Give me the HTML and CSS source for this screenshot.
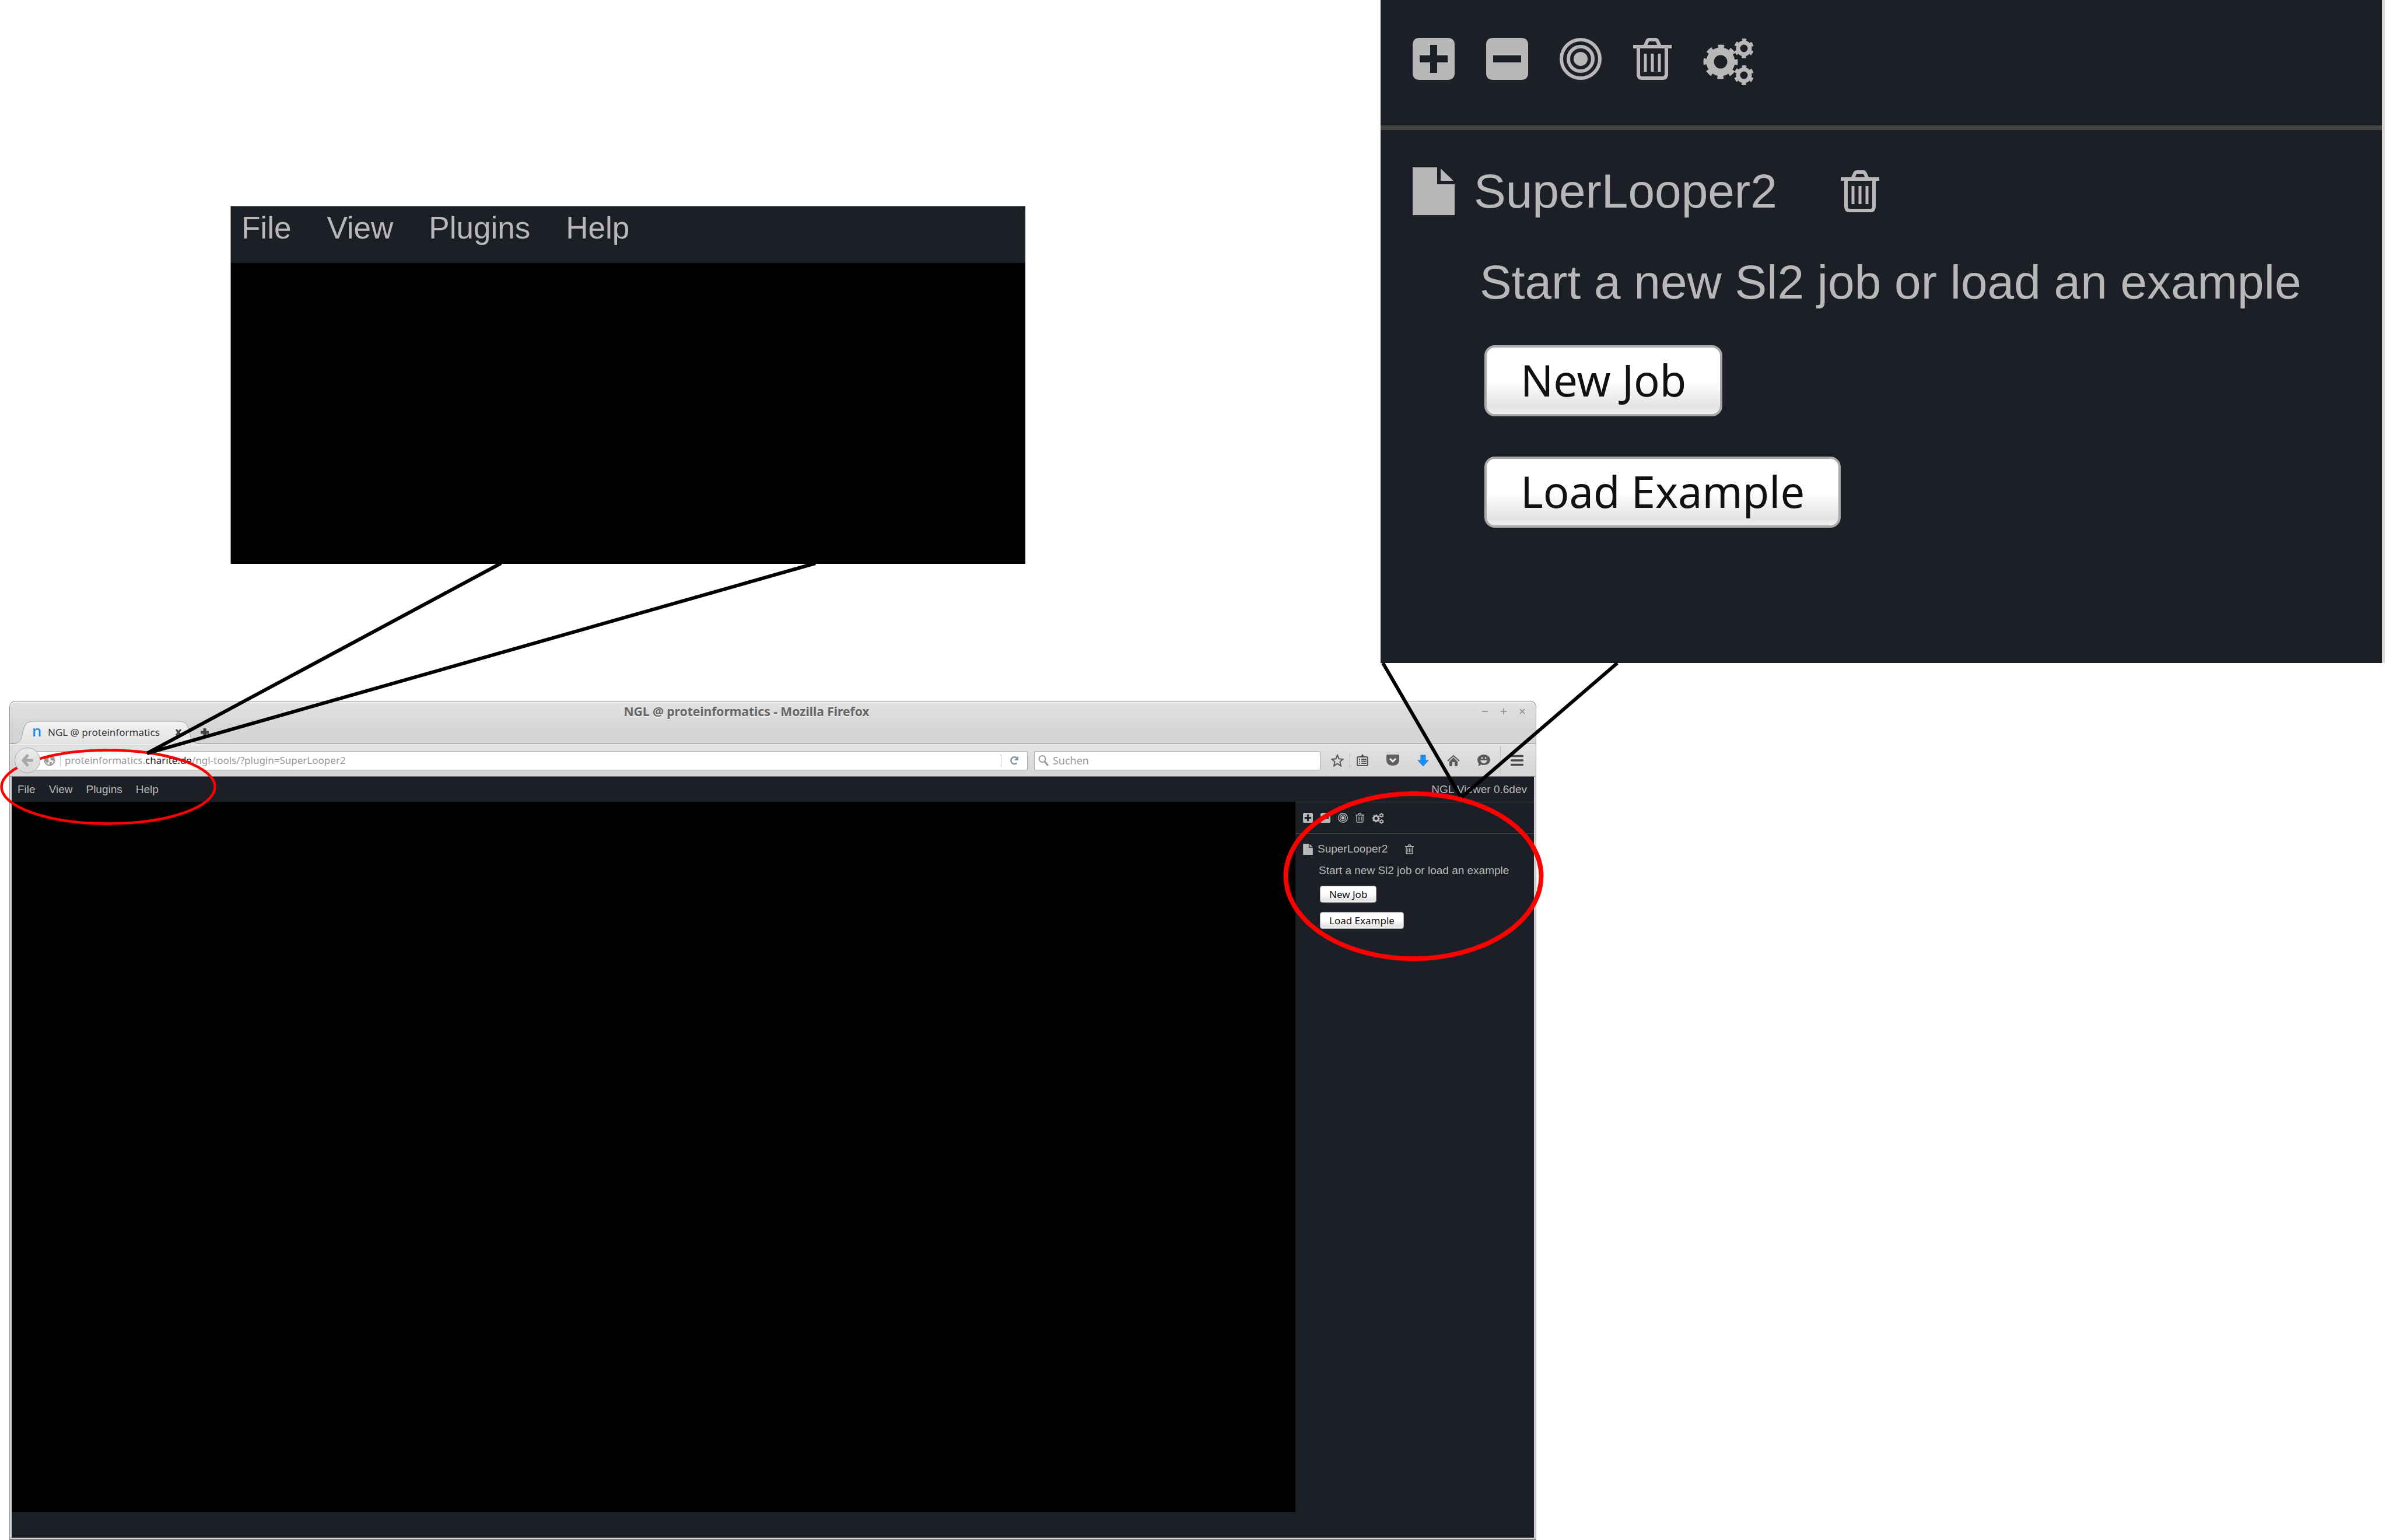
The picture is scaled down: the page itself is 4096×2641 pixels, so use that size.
FILE: index.html
```html
<!DOCTYPE html>
<html lang="en">
<head>
<meta charset="utf-8">
<title>NGL @ proteinformatics</title>
<link rel="stylesheet" href="styles.css">
</head>
<body>
<svg class="sprite" aria-hidden="true">
  <symbol id="i-plus" viewBox="0 0 72 72"><path fill-rule="evenodd" d="M12 0H60Q72 0 72 12V60Q72 72 60 72H12Q0 72 0 60V12Q0 0 12 0ZM30 12V30H12V42H30V60H42V42H60V30H42V12Z"/></symbol>
  <symbol id="i-minus" viewBox="0 0 72 72"><path fill-rule="evenodd" d="M12 0H60Q72 0 72 12V60Q72 72 60 72H12Q0 72 0 60V12Q0 0 12 0ZM12 30V42H60V30Z"/></symbol>
  <symbol id="i-target" viewBox="0 0 72 72"><circle cx="36" cy="36" r="12"/><g fill="none" stroke="currentColor" stroke-width="6"><circle cx="36" cy="36" r="21"/><circle cx="36" cy="36" r="33"/></g></symbol>
  <symbol id="i-trash" viewBox="0 0 66 72"><g fill="none" stroke="currentColor" stroke-width="6"><path d="M0 15H66M9 15V62Q9 69 15 69H51Q57 69 57 62V15M20 15L24 6Q25 3 28 3H38Q41 3 42 6L46 15"/><path stroke-width="5" d="M21 27V58M33 27V58M45 27V58"/></g></symbol>
  <symbol id="i-gears" viewBox="0 0 88 82"><g fill="none" stroke="currentColor"><circle cx="30" cy="41" r="18" stroke-width="13"/><circle cx="30" cy="41" r="26" stroke-width="7" stroke-dasharray="10.4 10.02" stroke-dashoffset="5.2"/><circle cx="70" cy="18" r="10" stroke-width="7"/><circle cx="70" cy="18" r="14" stroke-width="6" stroke-dasharray="7 7.66" stroke-dashoffset="-3.800"/><circle cx="70" cy="64" r="10" stroke-width="7"/><circle cx="70" cy="64" r="14" stroke-width="6" stroke-dasharray="7 7.66" stroke-dashoffset="-3.800"/></g></symbol>
  <symbol id="i-file" viewBox="0 0 72 82"><path d="M0 0H42V29H72V82H0ZM48 2L70 23H48Z"/></symbol>
</svg>

<main class="figure">
  <section class="callouts">
    <div class="ngl ngl-menu-detail">
      <nav class="menubar">
        <a href="#file">File</a><a href="#view">View</a><a href="#plugins">Plugins</a><a href="#help">Help</a>
      </nav>
      <div class="stage"></div>
    </div>
    <aside class="ngl panel panel-detail">
      <div class="toolbar">
        <button class="icon" aria-label="Expand all"><svg><use href="#i-plus"/></svg></button>
        <button class="icon" aria-label="Collapse all"><svg><use href="#i-minus"/></svg></button>
        <button class="icon" aria-label="Center"><svg><use href="#i-target"/></svg></button>
        <button class="icon icon-trash" aria-label="Dispose all"><svg><use href="#i-trash"/></svg></button>
        <button class="icon icon-gears" aria-label="Settings"><svg><use href="#i-gears"/></svg></button>
      </div>
      <div class="component">
        <div class="component-head">
          <span class="icon icon-file"><svg><use href="#i-file"/></svg></span>
          <span class="component-name">SuperLooper2</span>
          <button class="icon icon-trash" aria-label="Dispose"><svg><use href="#i-trash"/></svg></button>
        </div>
        <p class="hint">Start a new Sl2 job or load an example</p>
        <div class="actions">
          <button class="push">New Job</button>
          <button class="push">Load Example</button>
        </div>
      </div>
    </aside>
  </section>

  <section class="desktop">
    <div class="window">
      <header class="titlebar">
        <h1 class="window-title">NGL @ proteinformatics - Mozilla Firefox</h1>
        <div class="window-controls">
          <button class="chrome" aria-label="Minimize"><svg viewBox="0 0 12 12"><path d="M1 6H11"/></svg></button>
          <button class="chrome" aria-label="Maximize"><svg viewBox="0 0 12 12"><path d="M1 6H11M6 1V11"/></svg></button>
          <button class="chrome" aria-label="Close"><svg viewBox="0 0 12 12"><path d="M2 2L10 10M10 2L2 10"/></svg></button>
        </div>
      </header>
      <div class="tabs">
        <div class="tab">
          <svg class="tab-shape" viewBox="0 0 324 40" preserveAspectRatio="none" aria-hidden="true"><defs><linearGradient id="tabfill" x2="0" y2="1"><stop stop-color="#f3f3f3"/><stop offset="1" stop-color="#e2e2e2"/></linearGradient></defs><path d="M0 40C15 40 16 33 19 20C22 7 25 1 38 1H286C299 1 302 7 305 20C308 33 309 40 324 40Z" fill="url(#tabfill)"/><path d="M0 39C15 39 16 33 19 20C22 7 25 1 38 1H286C299 1 302 7 305 20C308 33 309 39 324 39" fill="none" stroke="#9aa1a7" stroke-width="1"/></svg>
          <span class="favicon">n</span>
          <span class="tab-title">NGL @ proteinformatics</span>
          <button class="chrome tab-close" aria-label="Close tab"><svg viewBox="0 0 12 12"><path d="M2 1L10 11M10 1L2 11"/></svg></button>
        </div>
        <button class="chrome tab-new" aria-label="New tab"><svg viewBox="0 0 14 14"><path d="M0 7H14M7 0V14"/></svg></button>
      </div>
      <div class="navbar">
        <button class="back" aria-label="Back"><svg viewBox="0 0 20 20"><path d="M11 2L4 10L11 18M4 10H18"/></svg></button>
        <div class="address">
          <svg class="globe" viewBox="0 0 20 20"><circle cx="10" cy="10" r="8.5" fill="#eee" stroke="#999" stroke-width="2"/><path fill="#999" d="M3 4L8 2L10 5L7 8L9 11L6 15L2 10ZM12 3L17 6L18 11L14 10L11 7ZM10 13L14 13L13 18L10 18Z"/></svg>
          <span class="url" role="textbox" aria-label="Address" contenteditable="true" spellcheck="false">proteinformatics.<b>charite.de</b>/ngl-tools/?plugin=SuperLooper2</span>
          <button class="reload" aria-label="Reload"><svg viewBox="0 0 16 16"><path d="M12.500 12.500A6 6 0 1 1 12 3.500" fill="none" stroke="#8293a2" stroke-width="2.500"/><path d="M15 0V8H8Z" fill="#8293a2"/></svg></button>
        </div>
        <label class="search">
          <svg viewBox="0 0 20 20" aria-hidden="true"><circle cx="8" cy="7.500" r="5.500" fill="none" stroke="#999" stroke-width="2"/><path d="M12 12L18 19" stroke="#999" stroke-width="3"/></svg>
          <input type="search" placeholder="Suchen" aria-label="Suchen">
        </label>
        <div class="tools">
          <button class="tool" aria-label="Bookmark"><svg viewBox="0 0 22 22"><path d="M11 2L13.700 8.300L20.500 9L15.400 13.500L17 20.500L11 16.700L5 20.500L6.600 13.500L1.500 9L8.300 8.300Z" fill="none" stroke="#555" stroke-width="2"/></svg></button>
          <i class="rule"></i>
          <button class="tool" aria-label="Bookmarks list"><svg viewBox="0 0 22 22"><path d="M8 4L11 0L14 4Z" fill="#555"/><rect x="2" y="5" width="18" height="15" rx="2" fill="none" stroke="#555" stroke-width="2"/><path d="M5 9H7M9 9H18M5 12.500H7M9 12.500H18M5 16H7M9 16H18" stroke="#555" stroke-width="2"/></svg></button>
          <button class="tool" aria-label="Pocket"><svg viewBox="0 0 22 22"><path d="M2 1H20Q22 1 22 3V9Q22 20 11 20Q0 20 0 9V3Q0 1 2 1Z" fill="#5f5f5f"/><path d="M6 8L11 13L16 8" fill="none" stroke="#eee" stroke-width="3"/></svg></button>
          <button class="tool" aria-label="Downloads"><svg viewBox="0 0 22 22"><path d="M7 2H15V11H20L11 21L2 11H7Z" fill="#1492fb" stroke="#2b78c0"/></svg></button>
          <button class="tool" aria-label="Home"><svg viewBox="0 0 22 22"><path d="M1 12L11 3L21 12" fill="none" stroke="#5a5a5a" stroke-width="2"/><path d="M4 13L11 6L18 13V21H13V14H9V21H4Z" fill="#5a5a5a"/></svg></button>
          <button class="tool" aria-label="Chat"><svg viewBox="0 0 22 22"><path d="M11 1C17 1 22 5 22 10C22 16 17 19 11 19Q8 19 6 18Q4 21 1 21Q3 19 2 16Q0 13 0 10C0 5 5 1 11 1Z" fill="#5a5a5a"/><circle cx="8" cy="7" r="1.500" fill="#ddd"/><circle cx="14" cy="7" r="1.500" fill="#ddd"/><path d="M5 11H17Q15 16 11 16Q7 16 5 11Z" fill="#ddd"/></svg></button>
          <i class="rule rule-tall"></i>
          <button class="tool" aria-label="Menu"><svg viewBox="0 0 22 22"><path d="M1.500 3.500H20.500M1.500 11H20.500M1.500 18.500H20.500" stroke="#4a4a4a" stroke-width="3.500" stroke-linecap="round"/></svg></button>
        </div>
      </div>
      <div class="ngl app">
        <nav class="menubar">
          <a href="#file">File</a><a href="#view">View</a><a href="#plugins">Plugins</a><a href="#help">Help</a>
          <span class="version">NGL Viewer 0.6dev</span>
        </nav>
        <div class="workspace">
          <div class="stage"></div>
          <aside class="panel">
            <div class="toolbar">
              <button class="icon" aria-label="Expand all"><svg><use href="#i-plus"/></svg></button>
              <button class="icon" aria-label="Collapse all"><svg><use href="#i-minus"/></svg></button>
              <button class="icon" aria-label="Center"><svg><use href="#i-target"/></svg></button>
              <button class="icon icon-trash" aria-label="Dispose all"><svg><use href="#i-trash"/></svg></button>
              <button class="icon icon-gears" aria-label="Settings"><svg><use href="#i-gears"/></svg></button>
            </div>
            <div class="component">
              <div class="component-head">
                <span class="icon icon-file"><svg><use href="#i-file"/></svg></span>
                <span class="component-name">SuperLooper2</span>
                <button class="icon icon-trash" aria-label="Dispose"><svg><use href="#i-trash"/></svg></button>
              </div>
              <p class="hint">Start a new Sl2 job or load an example</p>
              <div class="actions">
                <button class="push">New Job</button>
                <button class="push">Load Example</button>
              </div>
            </div>
          </aside>
        </div>
      </div>
    </div>
  </section>

  <svg class="annotations" viewBox="0 0 4096 2641" aria-hidden="true">
    <g fill="none" stroke="#f00">
      <ellipse cx="185.500" cy="1349.500" rx="183" ry="63" stroke-width="4.500"/>
      <ellipse cx="2423.500" cy="1502.500" rx="219" ry="141.500" stroke-width="8"/>
    </g>
    <path fill="none" stroke="#000" stroke-width="6" d="M859 966L252 1292M1398 966L252 1292M2371 1137L2504 1366M2773 1137L2506 1367"/>
  </svg>
</main>
</body>
</html>
```
FILE: styles.css
```css
* { box-sizing: border-box; }

body {
  margin: 0;
  background: #fff;
  font-family: "Noto Sans", "Open Sans", sans-serif;
  font-size: 17px;
}

button {
  margin: 0;
  padding: 0;
  border: 0;
  background: none;
  font: inherit;
  color: inherit;
}

svg { display: block; }
.sprite { position: absolute; width: 0; height: 0; }

.figure {
  position: relative;
  display: flex;
  flex-direction: column;
  min-height: 100vh;
}

.callouts {
  display: grid;
  grid-template-columns: 395fr 1363fr 609fr 1722fr 7fr;
  align-items: start;
  margin-bottom: 65px;
}

.desktop {
  flex: 1;
  display: grid;
  grid-template-columns: 16fr 2618fr 1462fr;
}

.annotations {
  position: absolute;
  top: 0;
  left: 0;
  width: 100%;
  pointer-events: none;
}

/* NGL application, shared by the window and the enlarged details */
.ngl {
  --text: 19px;
  --icon: 17px;
  --trash: 15px;
  --gears: 21px;
  --file: 19px;
  background: #1d1f27;
  color: #b8b8b8;
  font-family: "Liberation Sans", Arial, sans-serif;
  font-size: var(--text);
}

.menubar {
  display: flex;
  align-items: center;
  gap: 23px;
  height: 43px;
  padding: 0 12px 0 10px;
}
.menubar a { color: inherit; text-decoration: none; }
.version { margin-left: auto; }
.stage { background: #000; }

.icon { display: block; width: var(--icon); flex: none; }
.icon svg { width: 100%; height: var(--icon); fill: currentColor; }
.icon-trash { width: var(--trash); }
.icon-gears { width: var(--gears); }
.icon-gears svg { height: var(--file); }
.icon-file svg { height: var(--file); }

.toolbar {
  display: flex;
  align-items: flex-start;
  gap: 13px;
  height: 55px;
  padding: 18px 13px 0;
  border-top: 1px solid #444;
  border-bottom: 1px solid #444;
}
.component { padding: 14px 13px 0; }
.component-head { display: flex; align-items: center; height: 24px; gap: 8px; }
.component-head .icon-trash { margin-left: 22px; }
.hint { margin: 13px 0 14px 27px; line-height: 24px; white-space: nowrap; }
.actions {
  display: flex;
  flex-direction: column;
  align-items: flex-start;
  gap: 16px;
  margin-left: 29px;
}
.push {
  height: 29px;
  padding: 0 15px;
  border: 1px solid #aaa;
  border-radius: 4px;
  background: linear-gradient(#fff 50%, #e2e2e2 90%, #f4f4f4);
  color: #111;
  font-family: "Noto Sans", sans-serif;
  font-size: 17px;
  line-height: 1;
  white-space: nowrap;
}

/* Enlarged menu */
.ngl-menu-detail {
  --text: 53px;
  grid-column: 2;
  margin-top: 353px;
  border: 1px solid #888;
  border-width: 1px 0 0 1px;
}
.ngl-menu-detail .menubar {
  align-items: flex-start;
  gap: 61px;
  height: 97px;
  padding: 0 18px;
  line-height: 74px;
}
.ngl-menu-detail .stage { height: 516px; }

/* Enlarged side panel */
.panel-detail {
  --text: 82px;
  --icon: 72px;
  --trash: 66px;
  --gears: 88px;
  --file: 82px;
  grid-column: 4;
  padding-bottom: 232px;
  border-right: 5px solid #d8d8d8;
}
.panel-detail .toolbar {
  gap: 54px;
  height: 223px;
  padding: 65px 55px 0;
  border-top: 0;
  border-bottom: 8px solid #444;
}
.panel-detail .component { padding: 55px 55px 0; }
.panel-detail .component-head { height: 100px; gap: 33px; }
.panel-detail .component-head .icon-trash { margin-left: 76px; }
.panel-detail .hint { margin: 56px 0 58px 115px; line-height: 100px; }
.panel-detail .actions { gap: 69px; margin-left: 123px; }
.panel-detail .push {
  height: 122px;
  padding: 0 58px 2px;
  border-width: 4px;
  border-radius: 18px;
  font-size: 74px;
}

/* Browser window */
.window {
  grid-column: 2;
  display: flex;
  flex-direction: column;
  padding: 0 3px 3px;
  border: 1px solid #8e8e8e;
  border-bottom-color: #555;
  border-radius: 10px 10px 0 0;
  background: linear-gradient(#e2e2e2, #d5d5d5 50px, #d5d5d5);
  box-shadow: inset 0 2px 0 #f4f4f4;
}
.titlebar { display: flex; align-items: center; height: 33px; padding-right: 14px; }
.window-title {
  flex: 1;
  margin: 0;
  color: #666;
  font-size: 21px;
  line-height: 24px;
  text-align: center;
  text-shadow: 0 2px 0 #f0f0f0;
}
.window-controls { display: flex; gap: 20px; }
.chrome svg { width: 12px; height: 12px; fill: none; stroke: #999; stroke-width: 2; }

.tabs { display: flex; align-items: center; height: 40px; border-bottom: 1px solid #999; margin: 0 -3px; padding-left: 3px; }
.tab {
  position: relative;
  display: flex;
  align-items: center;
  width: 324px;
  height: 40px;
  padding: 0 32px 0 35px;
}
.tab-shape { position: absolute; top: 0; left: 0; width: 100%; height: 100%; }
.favicon {
  position: relative;
  width: 27px;
  color: #1489f5;
  font-size: 26px;
  font-weight: 500;
  line-height: 26px;
  margin-top: -6px;
}
.tab-title { position: relative; color: #333; }
.tab-close { position: relative; margin-left: auto; }
.tab-close svg { stroke: #444; stroke-width: 3; }
.tab-new svg { width: 14px; height: 14px; stroke: #444; stroke-width: 5; }

.navbar {
  display: flex;
  align-items: center;
  height: 56px;
  margin: 0 -3px;
  padding: 0 21px 0 8px;
  border-top: 1px solid #f4f4f4;
  border-bottom: 1px solid #888;
  background: linear-gradient(#e2e2e2, #d5d5d5);
}
.back {
  position: relative;
  z-index: 1;
  display: grid;
  place-items: center;
  flex: none;
  width: 44px;
  height: 44px;
  border: 1px solid #a4abb2;
  border-radius: 50%;
  background: linear-gradient(#ececec, #d8d8d8);
}
.back svg { width: 24px; height: 24px; fill: none; stroke: #a8a8a8; stroke-width: 4; }
.address, .search {
  display: flex;
  align-items: center;
  height: 33px;
  border: 1px solid #aaa;
  border-radius: 3px;
  background: #fff;
}
.address { flex: 1703; min-width: 0; margin-left: -9px; padding-left: 14px; }
.globe { width: 20px; height: 20px; }
.url {
  flex: 1;
  margin-left: 8px;
  padding-left: 7px;
  border-left: 1px solid #ccc;
  color: #999;
  line-height: 22px;
  white-space: nowrap;
}
.url b { color: #222; font-weight: 400; }
.reload { width: 45px; padding-left: 14px; border-left: 1px solid #ccc; line-height: 22px; }
.reload svg { width: 16px; height: 22px; }
.search { flex: 489; margin-left: 11px; padding-left: 5px; }
.search svg { width: 20px; height: 20px; flex: none; }
.search input {
  flex: 1;
  min-width: 0;
  padding: 0 0 0 6px;
  border: 0;
  background: none;
  font: 18px "Noto Sans", sans-serif;
}
.search input::placeholder { color: #999; opacity: 1; }
.tools { display: flex; align-items: center; gap: 30px; padding-left: 18px; }
.tool svg { width: 22px; height: 22px; }
.rule { width: 1px; height: 25px; margin: 0 -20px; background: #aaa; }
.rule-tall { height: 48px; margin: 0 -13px; background: #c4c4c4; }

.app { flex: 1; display: flex; flex-direction: column; }
.workspace {
  flex: 1;
  display: grid;
  grid-template-columns: 2201fr 409fr;
}
.workspace .stage { margin-bottom: 44px; }
```
